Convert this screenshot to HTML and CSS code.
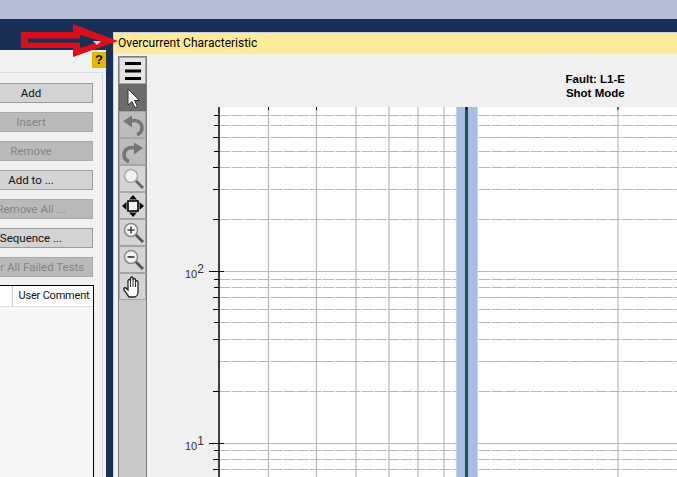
FILE: index.html
```html
<!DOCTYPE html>
<html>
<head>
<meta charset="utf-8">
<title>Overcurrent Characteristic</title>
<link rel="stylesheet" href="styles.css">
</head>
<body>
<div class="titlebar"></div>
<div class="workspace">
  <section class="left">
    <div class="help">?</div>
    <div class="left-inner">
      <div class="btn">Add</div>
      <div class="btn off">Insert</div>
      <div class="btn off">Remove</div>
      <div class="btn">Add to ...</div>
      <div class="btn off">Remove All ...</div>
      <div class="btn">Sequence ...</div>
      <div class="btn off">Clear All Failed Tests</div>
      <div class="table">
        <div class="thead"><div class="th">User Comment</div></div>
      </div>
    </div>
  </section>
  <section class="right">
    <div class="caption">Overcurrent Characteristic</div>
    <div class="content">
      <div class="toolbar">
        <div class="tool first"><svg width="24" height="24" viewBox="0 0 24 24"><path d="M4 4.500h16M4 12h16M4 19.500h16" stroke="#000" stroke-width="3.200"/></svg></div>
        <div class="tool active"><svg width="24" height="24" viewBox="0 0 24 24"><path d="M7 3v16l4-3.500 3 6 2.500-1-3-6h5z" fill="#fff" stroke="#333" stroke-width="1"/></svg></div>
        <div class="tool dim"><svg width="24" height="24" viewBox="0 0 24 24"><path d="M9 8.500C15 6 21 9 21 14.500c0 3-2 6-5 7" fill="none" stroke="#757575" stroke-width="3.600"/><path d="M2 8l9-5.500v12z" fill="#757575"/></svg></div>
        <div class="tool dim"><svg width="24" height="24" viewBox="0 0 24 24"><path d="M15 8.500C9 6 3 9 3 14.500c0 3 2 6 5 7" fill="none" stroke="#757575" stroke-width="3.600"/><path d="M22 8l-9-5.500v12z" fill="#757575"/></svg></div>
        <div class="tool"><svg width="24" height="24" viewBox="0 0 24 24"><circle cx="10" cy="9" r="6.500" fill="#f2f2f2" stroke="#a8a8a8" stroke-width="1.500"/><path d="M15 14l7 7" stroke="#666" stroke-width="2.800"/></svg></div>
        <div class="tool"><svg width="24" height="24" viewBox="0 0 24 24"><path d="M12 1l4 4.500H8zM12 23l-4-4.500h8zM1 12l4.500-4v8zM23 12l-4.500 4V8z" fill="#000"/><rect x="7" y="7" width="10" height="10" fill="#eee" stroke="#000" stroke-width="1.600"/></svg></div>
        <div class="tool"><svg width="24" height="24" viewBox="0 0 24 24"><circle cx="10" cy="9" r="6.500" fill="#f2f2f2" stroke="#8a8a8a" stroke-width="1.500"/><path d="M6.500 9h7M10 5.500v7" stroke="#444" stroke-width="1.600"/><path d="M15 14l7 7" stroke="#555" stroke-width="2.800"/></svg></div>
        <div class="tool"><svg width="24" height="24" viewBox="0 0 24 24"><circle cx="10" cy="9" r="6.500" fill="#f2f2f2" stroke="#8a8a8a" stroke-width="1.500"/><path d="M6.500 9h7" stroke="#444" stroke-width="1.800"/><path d="M15 14l7 7" stroke="#555" stroke-width="2.800"/></svg></div>
        <div class="tool"><svg width="24" height="24" viewBox="0 0 24 24"><path d="M8 22l-5-7c-1-2 1-3 2.500-1.500L7 15V6c0-2 2.500-2 2.500 0V3.500c0-2 2.500-2 2.500 0V5c0-2 2.500-2 2.500 0v2c0-2 2.500-1.500 2.500.5V17c0 3-2 5-4 5z" fill="#fff" stroke="#222" stroke-width="1.300"/><path d="M9.500 6v6M12 5v7M14.500 6v6" stroke="#333" stroke-width="1"/></svg></div>
      </div>
      <div class="chart-area">
        <div class="chart-title">Fault: L1-E<br>Shot Mode</div>
        <div class="ylabel y2">10<sup>2</sup></div>
        <div class="ylabel y1">10<sup>1</sup></div>
        <svg class="plot" width="531" height="370" viewBox="0 0 531 370">
          <rect x="72" y="0" width="459" height="370" fill="#fff"/>
          <path class="minor-base" d="M72 8.500H531M72 18.500H531M72 30.500H531M72 44.500H531M72 60.500H531M72 82.500H531M72 112.500H531M72 172.500H531M72 180.500H531M72 190.500H531M72 202.500H531M72 215.500H531M72 232.500H531M72 254.500H531M72 284.500H531M72 343.500H531M72 352.500H531M72 362.500H531"/>
          <path class="minor-dash" d="M72 8.500H531M72 18.500H531M72 30.500H531M72 44.500H531M72 60.500H531M72 82.500H531M72 112.500H531M72 172.500H531M72 180.500H531M72 190.500H531M72 202.500H531M72 215.500H531M72 232.500H531M72 254.500H531M72 284.500H531M72 343.500H531M72 352.500H531M72 362.500H531"/>
          <path class="major" d="M72 164.500H531M72 336.500H531M121.500 0V370M169.500 0V370M209 0V370M242 0V370M271 0V370M297 0V370M471 0V370"/>
          <rect x="309" y="0" width="22" height="370" fill="#c4d2ee"/>
          <rect x="310" y="0" width="20" height="370" fill="#a9bce2"/>
          <rect x="318" y="0" width="3" height="370" fill="#12594f"/>
          <path d="M72 0V370" stroke="#000" stroke-width="1.500"/>
          <path d="M67 8.500h5M67 18.500h5M66 30.500h6M67 44.500h5M66 60.500h6M66 82.500h6M66 112.500h6M62 164.500h10M67 172.500h5M67 180.500h5M66 190.500h6M66 202.500h6M67 215.500h5M66 232.500h6M66 284.500h6M62 336.500h10M67 343.500h5M66 352.500h6M66 362.500h6" stroke="#000" fill="none"/>
          <path d="M121.500 0v3M169.500 0v3M319.500 0v3M471 0v3M72 164.500h5M72 336.500h5" stroke="#000"/>
        </svg>
      </div>
    </div>
  </section>
</div>
<svg class="arrow" width="100" height="36" viewBox="0 0 100 36"><path fill-rule="evenodd" d="M1 9H53V1L98 18 53 34V25H1zM8 15.500V19.500H60V25L81 18 60 12V15.500z" fill="#d9101c"/></svg>
<div class="drop"></div>
</body>
</html>
```

FILE: styles.css
```css
* { box-sizing: border-box; }
html, body { margin: 0; height: 100%; overflow: hidden; }
body { width: 677px; height: 477px; background: #1a2f55; font-family: Roboto, "Liberation Sans", Arial, sans-serif; color: #111; position: relative; }
.titlebar { height: 19px; background: #b5bed5; }
.workspace { display: flex; height: 458px; padding-top: 13px; }
.left { width: 106px; margin-top: 18px; background: #f1f1f1; position: relative; overflow: hidden; flex: none; }
.help { position: absolute; right: 0; top: 2px; width: 14px; height: 16px; background: #e5b500; font-family: "Liberation Sans", Arial, sans-serif; font-size: 13px; font-weight: 700; text-align: center; line-height: 16px; }
.left-inner { display: flex; flex-direction: column; align-items: flex-end; width: 103px; margin-top: 22px; height: 420px; padding: 10px 9px 0 0; gap: 9px; border-top: 1px solid #dcdcdc; border-right: 1px solid #dcdcdc; }
.btn { width: 124px; height: 20px; flex: none; background: #d3d3d3; border: 1px solid #9b9b9b; font-size: 11.500px; line-height: 18px; text-align: center; white-space: nowrap; }
.off { background: #b9b9b9; color: #858585; border-color: #a9a9a9; }
.table { width: 130px; height: 200px; flex: none; margin: -1px -1px 0 0; border: 1px solid #000; background: #f6f6f6; }
.thead { height: 21px; display: flex; justify-content: flex-end; background: #fff; border-bottom: 1px solid #ddd; }
.th { width: 81px; padding-left: 2px; border-left: 1px solid #ccc; font-size: 11px; letter-spacing: -0.2px; line-height: 20px; text-align: center; white-space: nowrap; }
.right { margin-left: 7px; flex: 1; min-width: 0; background: #f0f0f0; border-left: 1px solid #c8d0e0; border-top: 1px solid #c8d0e0; }
.caption { height: 21px; background: #ffeb9c; font-size: 12px; line-height: 20px; padding-left: 4px; color: #000; }
.content { display: flex; padding: 2px 0 0 4px; height: 437px; }
.toolbar { width: 29px; flex: none; display: flex; flex-direction: column; align-items: center; gap: 0; padding: 0; background: #c9c9c9; border: 1px solid #7d7d7d; }
.tool { width: 27px; height: 27px; flex: none; display: flex; align-items: center; justify-content: center; background: #d4d4d4; border: 1px solid #a5a5a5; }
.tool.first { background: #e4e4e4; }
.tool.active { background: #6c6c6c; border-color: #666; }
.tool.dim { background: #bcbcbc; }
.chart-area { flex: 1; position: relative; }
.chart-title { position: absolute; top: 16px; right: 52px; font-family: "Liberation Sans", Arial, sans-serif; font-size: 11.500px; font-weight: 700; text-align: center; line-height: 14px; color: #000; }
.plot { position: absolute; left: 0; top: 51px; display: block; }
.ylabel { position: absolute; left: 38px; font-family: "Liberation Sans", Arial, sans-serif; font-size: 11px; color: #333; line-height: 12px; }
.ylabel sup { font-size: 12px; line-height: 0; vertical-align: 5px; }
.y2 { top: 212px; }
.y1 { top: 384px; }
.major { fill: none; stroke: #b9b9b9; stroke-width: 1.200; }
.minor-base { fill: none; stroke: #e2e2e2; stroke-width: 1; }
.minor-dash { fill: none; stroke: #b7b7b7; stroke-width: 1; stroke-dasharray: 11 2; }
.arrow { position: absolute; left: 20px; top: 23px; }
.drop { position: absolute; left: 93px; top: 41px; width: 0; height: 0; border-left: 4px solid transparent; border-right: 4px solid transparent; border-top: 4px solid #c8cfe0; }
```
